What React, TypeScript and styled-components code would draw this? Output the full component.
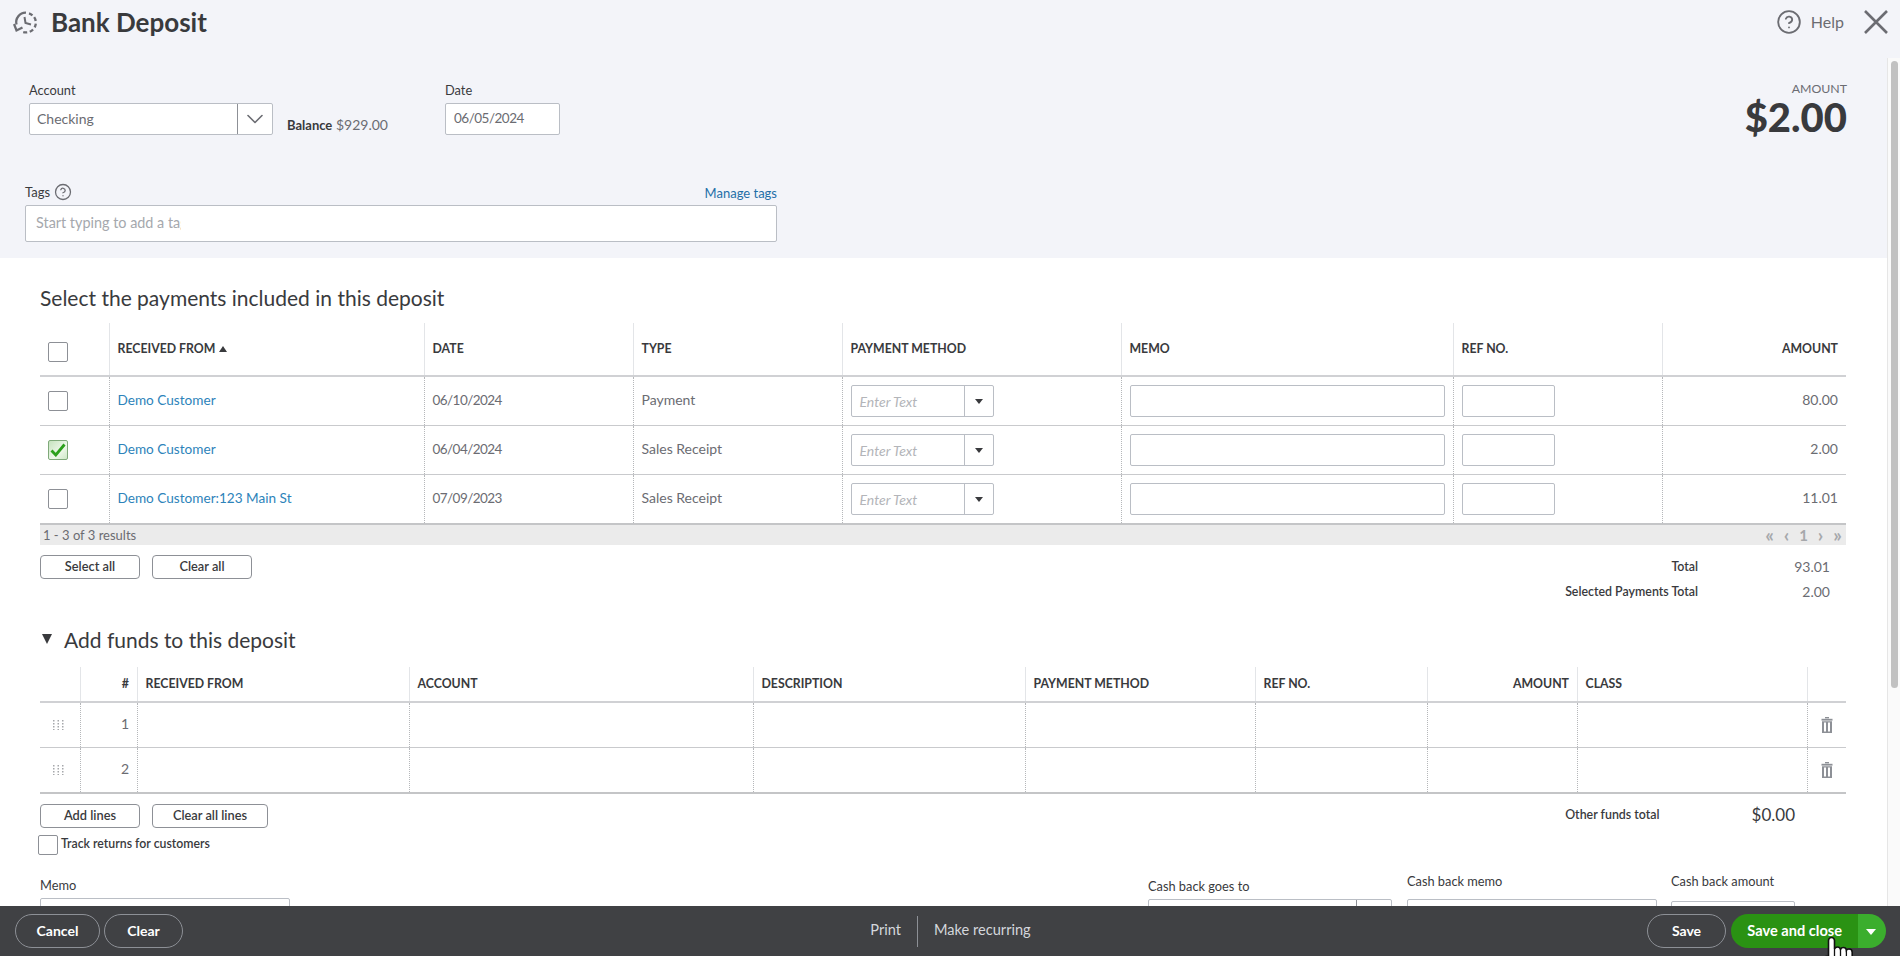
import React from "react";
import styled, { createGlobalStyle } from "styled-components";
import { ChevronDown, CircleHelp } from "lucide-react";

const Global = createGlobalStyle`
  html, body { margin: 0; padding: 0; height: 100%; overflow: hidden; background: #fff; }
  #root { height: 100%; }
  * { box-sizing: border-box; }
  body { font-family: Lato, "Open Sans", "Liberation Sans", sans-serif; color: #393a3d; }
`;

const Page = styled.div`
  position: relative;
  display: flex;
  flex-direction: column;
  width: 100%;
  height: 956px;
  overflow: hidden;
  background: #fff;
`;
const TopBar = styled.header`
  flex: 0 0 58px;
  display: flex;
  align-items: flex-start;
  padding: 10px 12px 0 13px;
  background: #f3f4f9;
`;
const Title = styled.h1`
  margin: 0 0 0 13px;
  font-size: 26px;
  line-height: 24px;
  font-weight: 700;
  color: #393a3d;
`;
const HelpLink = styled.div`
  margin-left: auto;
  display: flex;
  align-items: center;
  gap: 9px;
  height: 24px;
  color: #6b6c72;
  font-size: 16px;
  & > span { padding-bottom: 2px; }
`;
const CloseIcon = styled.svg`
  margin-left: 20px;
  width: 24px;
  height: 24px;
`;
const Body = styled.div`
  flex: 1 1 auto;
  min-height: 0;
  display: flex;
`;
const Content = styled.main`
  flex: 1 1 auto;
  min-width: 0;
  overflow: hidden;
`;
const ScrollTrack = styled.div`
  flex: 0 0 13px;
  padding: 3px 2px 0 3px;
  background: #fafafa;
  border-left: 1px solid #e6e6e6;
`;
const ScrollThumb = styled.div`
  height: 627px;
  border-radius: 4px;
  background: #c1c1c1;
`;
const TopPanel = styled.section`
  height: 200px;
  background: #f3f4f9;
`;
const FieldsRow = styled.div`
  display: flex;
  padding: 24px 40px 0 29px;
`;
const Field = styled.div<{ $width?: number; $top?: number; $gap?: number; $left?: number }>`
  width: ${(p) => (p.$width ? `${p.$width}px` : "auto")};
  margin-top: ${(p) => p.$top ?? 0}px;
  margin-left: ${(p) => p.$left ?? 0}px;
  & > label {
    display: block;
    height: 16px;
    line-height: 16px;
    margin-bottom: ${(p) => p.$gap ?? 5}px;
    font-size: 12.8px;
    color: #393a3d;
    white-space: nowrap;
  }
`;
const InputBox = styled.div`
  display: flex;
  align-items: center;
  height: 32px;
  padding: 0 0 2px 8px;
  background: #fff;
  border: 1px solid #babec5;
  border-radius: 2px;
  font-size: 13.5px;
  letter-spacing: -0.5px;
  color: #6b6c72;
`;
const ComboBox = styled(InputBox)`
  padding: 0;
  font-size: 14px;
  letter-spacing: 0;
  & > span {
    flex: 1;
    padding: 0 0 2px 7px;
  }
`;
const ComboButton = styled.div`
  flex: 0 0 35px;
  height: 100%;
  display: flex;
  align-items: center;
  justify-content: center;
  border-left: 1px solid #8d9096;
  color: #6b6c72;
`;
const Balance = styled.div`
  flex: 0 0 158px;
  align-self: flex-end;
  margin: 0 0 3px 14px;
  line-height: 18px;
  font-size: 14px;
  color: #6b6c72;
  white-space: nowrap;
  & > b {
    font-size: 13px;
    font-weight: 700;
    color: #393a3d;
  }
`;
const AmountBlock = styled.div`
  margin-left: auto;
  margin-top: -1px;
  text-align: right;
`;
const AmountLabel = styled.div`
  font-size: 12.3px;
  line-height: 16px;
  color: #6b6c72;
`;
const AmountValue = styled.div`
  font-size: 40px;
  line-height: 40px;
  font-weight: 900;
  color: #393a3d;
`;
const TagsBlock = styled.div`
  width: 752px;
  margin: 47px 0 0 25px;
`;
const TagsHead = styled.div`
  display: flex;
  align-items: center;
  height: 16px;
  margin-bottom: 5px;
  gap: 4px;
  font-size: 13px;
  color: #393a3d;
  & > svg { color: #6b6c72; }
`;
const ManageLink = styled.a`
  margin-left: auto;
  padding-top: 1px;
  color: #1f6fa8;
  font-size: 13px;
`;
const TagsBox = styled.div`
  height: 37px;
  padding: 0 10px 2px;
  display: flex;
  align-items: center;
  background: #fff;
  border: 1px solid #babec5;
  border-radius: 2px;
`;
const TagsHint = styled.span`
  width: 145px;
  overflow: hidden;
  white-space: nowrap;
  font-size: 14.4px;
  color: #a5a8ad;
`;
const Main = styled.section`
  padding: 26px 41px 0 40px;
`;
const SectionTitle = styled.h2`
  display: flex;
  align-items: center;
  margin: 0 0 11px;
  height: 28px;
  padding-bottom: 2px;
  font-size: 21px;
  font-weight: 400;
  color: #393a3d;
`;
const FundsTitle = styled(SectionTitle)`
  margin: 22px 0 13px;
  gap: 12px;
  & > i {
    width: 0;
    height: 0;
    margin-left: 2px;
    border-left: 5.5px solid transparent;
    border-right: 5.5px solid transparent;
    border-top: 10px solid #393a3d;
  }
`;
const Row = styled.div<{ $cols: string; $h: number; $line: number; $color: string }>`
  display: grid;
  grid-template-columns: ${(p) => p.$cols};
  height: ${(p) => p.$h + p.$line}px;
  border-bottom: ${(p) => p.$line}px solid ${(p) => p.$color};
`;
const HeadCell = styled.div<{ $right?: boolean }>`
  display: flex;
  align-items: center;
  justify-content: ${(p) => (p.$right ? "flex-end" : "flex-start")};
  gap: 4px;
  padding: 0 8px 1px 7.5px;
  font-size: 12.3px;
  font-weight: 700;
  color: #393a3d;
  white-space: nowrap;
  & + & { border-left: 1px solid #e3e5e8; }
`;
const Cell = styled.div<{ $right?: boolean }>`
  display: flex;
  align-items: center;
  justify-content: ${(p) => (p.$right ? "flex-end" : "flex-start")};
  padding: 0 8px 0 7.5px;
  font-size: 14px;
  color: #6b6c72;
  white-space: nowrap;
  & + & { border-left: 1px dotted #b5b7ba; }
`;
const TextCell = styled(Cell)`
  padding-bottom: 3px;
`;
const DateCell = styled(TextCell)`
  font-size: 13.5px;
  letter-spacing: -0.55px;
`;
const CheckCell = styled(Cell)`
  padding: 0 0 0 8px;
`;
const CheckHead = styled(HeadCell)`
  padding: 6px 0 0 8px;
`;
const DragCell = styled(Cell)`
  justify-content: center;
  padding: 0 4px 0 0;
`;
const TrashCell = styled(Cell)`
  justify-content: center;
  padding: 0;
`;
const SortMark = styled.i`
  width: 0;
  height: 0;
  border-left: 4px solid transparent;
  border-right: 4px solid transparent;
  border-bottom: 6px solid #393a3d;
`;
const Box = styled.span<{ $on?: boolean }>`
  display: flex;
  align-items: center;
  justify-content: center;
  flex: 0 0 20px;
  width: 20px;
  height: 20px;
  background: ${(p) => (p.$on ? "linear-gradient(135deg, #c6e3be, #eef8ea 60%, #cde7c6)" : "#fff")};
  border: 1px solid ${(p) => (p.$on ? "#7fa97a" : "#8d9096")};
  border-radius: 2px;
`;
const CustomerLink = styled.a`
  color: #2d83ba;
  font-size: 13.6px;
`;
const MethodBox = styled.div`
  display: flex;
  align-items: center;
  width: 143px;
  height: 32px;
  background: #fff;
  border: 1px solid #babec5;
  border-radius: 2px;
`;
const MethodHint = styled.span`
  flex: 1;
  padding-left: 8px;
  font-size: 14px;
  font-style: italic;
  color: #b3b5b9;
`;
const MethodButton = styled.span`
  flex: 0 0 29px;
  height: 100%;
  display: flex;
  align-items: center;
  justify-content: center;
  border-left: 1px solid #babec5;
  & > i {
    width: 0;
    height: 0;
    border-left: 4px solid transparent;
    border-right: 4px solid transparent;
    border-top: 5px solid #393a3d;
  }
`;
const BlankInput = styled.div<{ $w: number }>`
  width: ${(p) => p.$w}px;
  height: 32px;
  background: #fff;
  border: 1px solid #babec5;
  border-radius: 2px;
`;
const Band = styled.div`
  display: flex;
  align-items: center;
  justify-content: space-between;
  height: 20px;
  padding: 0 0 0 3px;
  background: #ebebeb;
  font-size: 13px;
  color: #6b6c72;
`;
const Pager = styled.div`
  display: flex;
  align-items: center;
  color: #a6a8ab;
  & > span {
    width: 17px;
    text-align: center;
    font-size: 19px;
    font-weight: 700;
    line-height: 20px;
  }
  & > em {
    width: 17px;
    text-align: center;
    font-size: 15px;
    font-style: normal;
    font-weight: 700;
    line-height: 20px;
  }
`;
const ActionsRow = styled.div`
  display: flex;
  justify-content: space-between;
  align-items: flex-start;
  margin-top: 10px;
`;
const ButtonGroup = styled.div`
  display: flex;
  gap: 12px;
`;
const SmallButton = styled.button<{ $w: number }>`
  width: ${(p) => p.$w}px;
  height: 24px;
  padding: 0 0 2px;
  background: #fff;
  border: 1px solid #8d9096;
  border-radius: 4px;
  font: 600 12.8px Lato, sans-serif;
  color: #393a3d;
`;
const Totals = styled.div`
  display: grid;
  grid-template-columns: auto 132px;
  grid-auto-rows: 25px;
  align-items: center;
  margin-top: -1px;
  padding-right: 16px;
  text-align: right;
  font-size: 12.4px;
  & > b { font-weight: 600; color: #393a3d; }
  & > span { font-size: 14px; color: #6b6c72; }
`;
const OtherFunds = styled.div`
  display: flex;
  align-items: center;
  height: 24px;
  gap: 92px;
  padding: 0 51px 3px 0;
  font-size: 12.4px;
  font-weight: 600;
  color: #393a3d;
  & > span {
    font-size: 17px;
    font-weight: 400;
  }
`;
const TrackRow = styled.div`
  display: flex;
  align-items: center;
  gap: 3px;
  margin: 7px 0 0 -2px;
  height: 20px;
  font-size: 12.3px;
  font-weight: 600;
  color: #393a3d;
  & > span { padding-bottom: 3px; }
`;
const BottomFields = styled.div`
  display: flex;
  align-items: flex-start;
  padding-right: 51px;
  margin-top: 22px;
`;
const Spacer = styled.div`
  flex: 1;
`;
const Footer = styled.footer`
  position: relative;
  flex: 0 0 50px;
  display: grid;
  grid-template-columns: 1fr auto 1fr;
  align-items: center;
  padding: 0 14px 0 15px;
  background: #404144;
`;
const FootLeft = styled.div`
  display: flex;
  gap: 4px;
`;
const FootCenter = styled.div`
  display: flex;
  align-items: center;
  color: #d4d7dc;
  font-size: 14.6px;
  & > span {
    line-height: 28px;
    padding-bottom: 3px;
  }
  & > span + span {
    margin-left: 16px;
    padding-left: 16px;
    border-left: 1px solid #8d9096;
  }
`;
const FootRight = styled.div`
  display: flex;
  justify-content: flex-end;
  gap: 5px;
`;
const PillButton = styled.button<{ $w: number }>`
  width: ${(p) => p.$w}px;
  height: 34px;
  padding: 0 0 2px;
  background: transparent;
  border: 1px solid #8d9096;
  border-radius: 17px;
  color: #fff;
  font: 700 14px Lato, sans-serif;
`;
const SplitButton = styled.div`
  display: flex;
  height: 34px;
  border-radius: 17px;
  overflow: hidden;
`;
const SplitMain = styled.div`
  width: 127px;
  display: flex;
  align-items: center;
  justify-content: flex-end;
  padding: 0 16px 2px 0;
  background: #2a9213;
  color: #fff;
  font-size: 14.6px;
  font-weight: 700;
  white-space: nowrap;
`;
const SplitArrow = styled.div`
  width: 28px;
  display: flex;
  align-items: center;
  justify-content: center;
  padding-right: 2px;
  background: #3bae2d;
  & > i {
    width: 0;
    height: 0;
    margin-top: 2px;
    border-left: 5px solid transparent;
    border-right: 5px solid transparent;
    border-top: 6px solid #fff;
  }
`;
const HandCursor = styled.svg`
  position: absolute;
  left: 1823px;
  top: 30px;
  width: 32px;
  height: 40px;
`;

const cols1 = "69px 315px 209px 209px 279px 332px 209px 184px";
const cols2 = "40px 57px 272px 344px 272px 230px 172px 150px 230px 39px";

const History = () => (
  <svg width="25" height="25" viewBox="0 0 25 24" fill="none" stroke="#6b6c72" strokeWidth="2.3">
    <path d="M3.5 14 A9.5 9.5 0 0 1 13 2.2" />
    <path d="M16 2.8 A9.7 9.7 0 0 1 10 21.5" strokeDasharray="4 2.6" />
    <path d="M11.5 6.5 L12.5 12.5 L18 14" strokeWidth="2" />
    <path d="M1 13.5 L3.5 20 L9.5 17" />
  </svg>
);
const Check = () => (
  <svg width="16" height="14" viewBox="0 0 16 14" fill="none" stroke="#2ca01c" strokeWidth="2.8">
    <path d="M1.5 7.5 L5.8 12 L14.5 1.5" />
  </svg>
);
const Dots = () => (
  <svg width="11" height="10" viewBox="0 0 11 10" fill="#a6a8ab">
    {[0, 1, 2, 3].flatMap((r) =>
      [0, 1, 2].map((c) => <rect key={`${r}${c}`} x={c * 4.5} y={r * 3} width="1.5" height="1.5" />),
    )}
  </svg>
);
const Trash = () => (
  <svg width="12" height="16" viewBox="0 0 12 16" fill="#8d9096">
    <rect x="4" y="0" width="4" height="1.4" />
    <rect x="0.5" y="1.8" width="11" height="1.8" />
    <path fillRule="evenodd" d="M1 4.2H11V16H1Z M3 5.5V14.5H5V5.5Z M7 5.5V14.5H9V5.5Z" />
  </svg>
);

const payments = [
  { name: "Demo Customer", date: "06/10/2024", type: "Payment", amount: "80.00", on: false },
  { name: "Demo Customer", date: "06/04/2024", type: "Sales Receipt", amount: "2.00", on: true },
  { name: "Demo Customer:123 Main St", date: "07/09/2023", type: "Sales Receipt", amount: "11.01", on: false },
];
const fundHeads: [string, boolean][] = [
  ["", false],
  ["#", true],
  ["RECEIVED FROM", false],
  ["ACCOUNT", false],
  ["DESCRIPTION", false],
  ["PAYMENT METHOD", false],
  ["REF NO.", false],
  ["AMOUNT", true],
  ["CLASS", false],
  ["", false],
];

export default function App() {
  return (
    <Page>
      <Global />
      <TopBar>
        <History />
        <Title>Bank Deposit</Title>
        <HelpLink>
          <CircleHelp size={26} strokeWidth={1.7} />
          <span>Help</span>
        </HelpLink>
        <CloseIcon viewBox="0 0 24 24" fill="none" stroke="#6b6c72" strokeWidth="2.6">
          <path d="M1 1 L23 23 M23 1 L1 23" />
        </CloseIcon>
      </TopBar>
      <Body>
        <Content>
          <TopPanel>
            <FieldsRow>
              <Field $width={244}>
                <label>Account</label>
                <ComboBox>
                  <span>Checking</span>
                  <ComboButton>
                    <ChevronDown size={28} strokeWidth={1.4} />
                  </ComboButton>
                </ComboBox>
              </Field>
              <Balance>
                <b>Balance</b> $929.00
              </Balance>
              <Field $width={115}>
                <label>Date</label>
                <InputBox>06/05/2024</InputBox>
              </Field>
              <AmountBlock>
                <AmountLabel>AMOUNT</AmountLabel>
                <AmountValue>$2.00</AmountValue>
              </AmountBlock>
            </FieldsRow>
            <TagsBlock>
              <TagsHead>
                Tags
                <CircleHelp size={18} strokeWidth={1.7} />
                <ManageLink>Manage tags</ManageLink>
              </TagsHead>
              <TagsBox>
                <TagsHint>Start typing to add a tag</TagsHint>
              </TagsBox>
            </TagsBlock>
          </TopPanel>
          <Main>
            <SectionTitle>Select the payments included in this deposit</SectionTitle>
            <Row $cols={cols1} $h={52} $line={2} $color="#d0d1d4">
              <CheckHead>
                <Box />
              </CheckHead>
              <HeadCell>
                RECEIVED FROM <SortMark />
              </HeadCell>
              <HeadCell>DATE</HeadCell>
              <HeadCell>TYPE</HeadCell>
              <HeadCell>PAYMENT METHOD</HeadCell>
              <HeadCell>MEMO</HeadCell>
              <HeadCell>REF NO.</HeadCell>
              <HeadCell $right>AMOUNT</HeadCell>
            </Row>
            {payments.map((p, i) => (
              <Row
                key={i}
                $cols={cols1}
                $h={48}
                $line={i === 2 ? 2 : 1}
                $color={i === 2 ? "#c4c5c7" : "#c9cacd"}
              >
                <CheckCell>
                  <Box $on={p.on}>{p.on && <Check />}</Box>
                </CheckCell>
                <TextCell>
                  <CustomerLink>{p.name}</CustomerLink>
                </TextCell>
                <DateCell>{p.date}</DateCell>
                <TextCell>{p.type}</TextCell>
                <Cell>
                  <MethodBox>
                    <MethodHint>Enter Text</MethodHint>
                    <MethodButton>
                      <i />
                    </MethodButton>
                  </MethodBox>
                </Cell>
                <Cell>
                  <BlankInput $w={316} />
                </Cell>
                <Cell>
                  <BlankInput $w={93} />
                </Cell>
                <TextCell $right>{p.amount}</TextCell>
              </Row>
            ))}
            <Band>
              <span>1 - 3 of 3 results</span>
              <Pager>
                <span>«</span>
                <span>‹</span>
                <em>1</em>
                <span>›</span>
                <span>»</span>
              </Pager>
            </Band>
            <ActionsRow>
              <ButtonGroup>
                <SmallButton $w={100}>Select all</SmallButton>
                <SmallButton $w={100}>Clear all</SmallButton>
              </ButtonGroup>
              <Totals>
                <b>Total</b>
                <span>93.01</span>
                <b>Selected Payments Total</b>
                <span>2.00</span>
              </Totals>
            </ActionsRow>
            <FundsTitle>
              <i />
              Add funds to this deposit
            </FundsTitle>
            <Row $cols={cols2} $h={34} $line={2} $color="#d0d1d4">
              {fundHeads.map(([t, right], i) => (
                <HeadCell key={i} $right={right}>
                  {t}
                </HeadCell>
              ))}
            </Row>
            {[1, 2].map((n) => (
              <Row
                key={n}
                $cols={cols2}
                $h={44}
                $line={n === 2 ? 2 : 1}
                $color={n === 2 ? "#c4c5c7" : "#c9cacd"}
              >
                <DragCell>
                  <Dots />
                </DragCell>
                <TextCell $right>{n}</TextCell>
                {[0, 1, 2, 3, 4, 5, 6].map((c) => (
                  <Cell key={c} />
                ))}
                <TrashCell>
                  <Trash />
                </TrashCell>
              </Row>
            ))}
            <ActionsRow>
              <ButtonGroup>
                <SmallButton $w={100}>Add lines</SmallButton>
                <SmallButton $w={116}>Clear all lines</SmallButton>
              </ButtonGroup>
              <OtherFunds>
                Other funds total
                <span>$0.00</span>
              </OtherFunds>
            </ActionsRow>
            <TrackRow>
              <Box />
              <span>Track returns for customers</span>
            </TrackRow>
            <BottomFields>
              <Field $width={250}>
                <label>Memo</label>
                <BlankInput $w={250} />
              </Field>
              <Spacer />
              <Field $width={244} $top={1}>
                <label>Cash back goes to</label>
                <ComboBox>
                  <span />
                  <ComboButton />
                </ComboBox>
              </Field>
              <Field $width={250} $left={15} $top={-4} $gap={10}>
                <label>Cash back memo</label>
                <BlankInput $w={250} />
              </Field>
              <Field $width={124} $left={14} $top={-4} $gap={12}>
                <label>Cash back amount</label>
                <BlankInput $w={124} />
              </Field>
            </BottomFields>
          </Main>
        </Content>
        <ScrollTrack>
          <ScrollThumb />
        </ScrollTrack>
      </Body>
      <Footer>
        <FootLeft>
          <PillButton $w={85}>Cancel</PillButton>
          <PillButton $w={79}>Clear</PillButton>
        </FootLeft>
        <FootCenter>
          <span>Print</span>
          <span>Make recurring</span>
        </FootCenter>
        <FootRight>
          <PillButton $w={79}>Save</PillButton>
          <SplitButton>
            <SplitMain>Save and close</SplitMain>
            <SplitArrow>
              <i />
            </SplitArrow>
          </SplitButton>
        </FootRight>
        <HandCursor viewBox="0 0 32 40">
          <path
            d="M8.5 1.5C10 1.5 11.5 2.8 11.5 4.5V13C12 11.8 13.2 11 14.5 11C16 11 17.2 12 17.5 13.3C18 12.2 19.2 11.5 20.4 11.5C22 11.5 23.2 12.7 23.4 14.2C24 13.4 25 13 26 13C27.8 13 29.2 14.4 29.2 16.2V24C29.2 30 26 34 24 38H10C8 33 2 28 1 24C.6 22 2 20.3 3.6 20.3C4.6 20.3 5 20.6 5.5 21V4.5C5.5 2.8 7 1.5 8.5 1.5Z"
            fill="#fff"
            stroke="#111"
            strokeWidth="1.6"
          />
          <path d="M11.5 13V20M17.5 13.3V20M23.4 14.2V20" fill="none" stroke="#111" strokeWidth="1.3" />
        </HandCursor>
      </Footer>
    </Page>
  );
}
